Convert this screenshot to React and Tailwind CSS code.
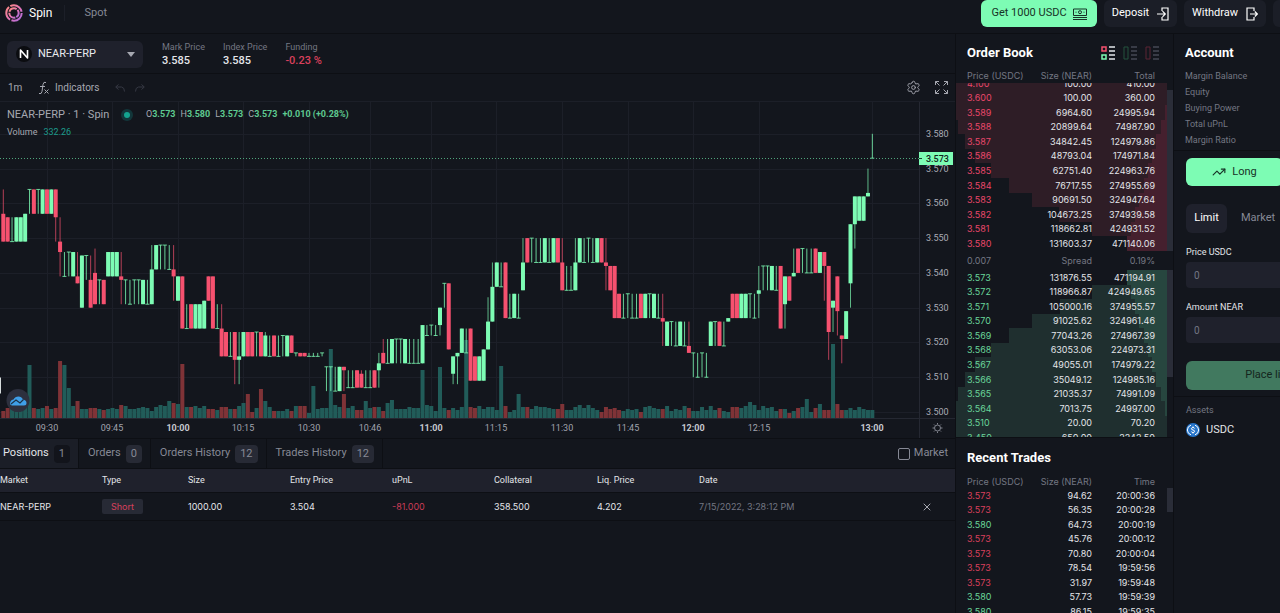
import React from 'react';
import { Settings, TrendingUp, X } from 'lucide-react';
import clsx from 'clsx';

// kind, body top, body bottom, volume, high, low (prices are thousandths above 3.500)
// G = up, R = down, T = doji closing at the high, B = doji closing at the low
const CANDLES = `
R 57 49 7 64|R 56 49 10|B 56 49 10|G 56 49 10|G 56 49 10|G 57 49 12|T 64 57 53|R 64 57 10|T 64 57 9|G 64 57 10|
R 64 57 12|G 64 57 9|R 64 56 10 64 49|R 49 46 57 56 39|B 46 39 53|T 46 39 30|G 46 39 12|R 39 37 17 46|G 45 30 9|T 45 38 9|
R 38 30 10 45|R 40 31 10 47|T 38 31 9|R 38 31 8|G 46 39 9|G 46 39 10|G 46 39 9|R 39 38 13 46 31|T 38 31 12|B 38 31 9|
T 38 31 9|T 38 31 10|G 38 31 11|B 38 31 10|G 41 31 7 48|G 48 41 11|T 48 41 13|T 48 41 12|B 48 41 17|R 41 39 15 48 32|
G 39 32 14|R 39 24 54|B 31 24 11|R 31 24 11|G 31 24 12|G 31 24 10|G 32 24 12|R 39 32 9|R 39 24 9|B 31 24 8|
R 24 16 11 31|R 23 16 11|B 23 16 9|R 23 15 9 23 8|G 16 15 12 23 8|G 23 16 15|R 23 16 24|R 23 16 6|T 23 16 10|R 23 16 29|
G 22 16 17 23|B 22 16 11|R 22 16 7|B 22 16 7|T 22 16 7|G 22 16 9|R 22 17 7|T 17 16 12|R 17 16 12|R 17 16 12|
B 17 16 5|B 17 16 32|B 17 16 9|T 17 16 10|T 13 6 10|T 13 6 69|B 13 6 13|G 13 6 11|R 13 12 24 13 6|B 12 7 10|
B 12 7 12|R 12 7 8|R 11 7 8 12|B 12 7 17|B 12 7 10|R 12 7 11|G 14 12 11 17 7|R 17 14 7 21|B 21 14 15|G 21 14 18|
T 21 14 9|T 21 14 9|G 21 14 9|B 21 14 11|B 21 14 10|B 21 14 10|G 25 14 48|B 25 22 13|T 25 22 12|B 25 22 7|
G 30 25 51 30 22|T 37 30 10|R 37 18 8|G 16 11 10 16 8|G 17 16 8 17 8|G 24 17 11|B 24 17 78|R 24 9 11|R 16 9 10|G 16 9 12|
G 18 9 9|G 26 18 11 33|G 36 26 11 43|G 43 36 8|B 43 36 52|R 43 27 12|B 34 27 6|G 34 27 8|B 34 27 24|G 43 35 11 50|
R 50 43 11|T 50 43 9|B 50 43 12|B 50 43 11|G 50 43 11|B 50 43 10|G 50 43 9|R 50 43 9|R 43 35 14 50|B 42 35 8|
B 42 35 8|G 43 35 11 50|G 50 43 13|B 50 43 10|T 50 43 13|B 50 43 10|G 50 43 8|R 50 43 6|R 43 42 11 50 35|R 42 35 9|
R 42 27 10|R 34 27 8|B 34 27 7|T 34 27 9|B 34 27 8|B 34 27 9|R 34 27 6|G 34 27 11|T 34 27 12|G 34 27 10|
B 34 27 9|R 27 26 9 34 19|G 26 19 12|T 26 19 7|B 26 19 9|G 26 19 8|B 26 19 12|R 19 17 10 26|T 17 10 7|B 17 10 7|
T 17 10 11|B 17 10 8|G 26 19 12|T 26 19 8|R 26 19 10|B 26 19 7|G 27 26 6|R 34 27 11|R 34 27 11|G 34 27 10|
G 34 27 12|T 34 27 16|B 34 27 13|G 35 34 8 42 27|T 42 35 12|T 42 35 10|G 42 35 11|B 42 35 7|R 42 24 9|G 39 31 9 39 24|
R 39 32 5|G 40 39 7 47|R 47 40 10|T 47 40 11|B 47 40 19|B 47 40 6|R 47 40 10|G 46 40 14|R 46 42 8 46 32|R 42 23 8 42 15|
G 32 30 74 32 23|R 39 29 14 39 22|R 22 21 8 22 14|G 29 21 8|G 54 37 10 54 30|G 62 54 8 62 47|G 62 55 11|G 62 55 9|G 63 62 8 70|B 80 73 8`
  .trim()
  .split('|')
  .map((row) => {
    const [kind, ...nums] = row.trim().split(' ');
    const [top, bottom, volume, high = top, low = bottom] = nums.map(Number);
    return { kind, top, bottom, volume, high, low };
  });

const TIMES = [
  [47, '09:30'], [112, '09:45'], [178, '10:00', true], [243, '10:15'], [309, '10:30'],
  [370, '10:46'], [431, '11:00', true], [496, '11:15'], [562, '11:30'], [628, '11:45'],
  [693, '12:00', true], [759, '12:15'], [872, '13:00', true],
];

const PRICES = [80, 70, 60, 50, 40, 30, 20, 10, 0];

// price, size, total, depth bar width
const ASKS = [
  ['4.100', '100.00', '410.00', 211], ['3.600', '100.00', '360.00', 211], ['3.589', '6964.60', '24995.94', 211],
  ['3.588', '20899.64', '74987.90', 209], ['3.587', '34842.45', '124979.86', 202], ['3.586', '48793.04', '174971.84', 192],
  ['3.585', '62751.40', '224963.76', 176], ['3.584', '76717.55', '274955.69', 158], ['3.583', '90691.50', '324947.64', 135],
  ['3.582', '104673.25', '374939.58', 108], ['3.581', '118662.81', '424931.52', 75], ['3.580', '131603.37', '471140.06', 40],
];

const BIDS = [
  ['3.573', '131876.55', '471194.91', 40], ['3.572', '118966.87', '424949.65', 75], ['3.571', '105000.16', '374955.57', 107],
  ['3.570', '91025.62', '324961.46', 135], ['3.569', '77043.26', '274967.39', 158], ['3.568', '63053.06', '224973.31', 176],
  ['3.567', '49055.01', '174979.22', 192], ['3.566', '35049.12', '124985.16', 202], ['3.565', '21035.37', '74991.09', 209],
  ['3.564', '7013.75', '24997.00', 211], ['3.510', '20.00', '70.20', 211], ['3.450', '650.00', '2242.50', 211],
];

const TRADES = [
  ['3.573', '94.62', '20:00:36'], ['3.573', '56.35', '20:00:28'], ['3.580', '64.73', '20:00:19'],
  ['3.573', '45.76', '20:00:12'], ['3.573', '70.80', '20:00:04'], ['3.573', '78.54', '19:59:56'],
  ['3.573', '31.97', '19:59:48'], ['3.580', '57.73', '19:59:39'], ['3.580', '86.15', '19:59:35'],
];

const TABS = [['Positions', 1], ['Orders', 0], ['Orders History', 12], ['Trades History', 12]];

const priceY = (p) => 310 - p * 3.4775;
const barX = (i) => 3.3 + i * 4.367;

function Candle({ candle, index }) {
  const { kind, top, bottom, volume, high, low } = candle;
  const x = barX(index);
  const color = kind === 'R' ? '#f6516f' : '#7dfcb4';
  const isDoji = kind === 'T' || kind === 'B';
  return (
    <g>
      <rect x={x - 2} y={316 - volume} width="4" height={volume} fill={kind === 'R' ? '#7f3337' : '#215c59'} />
      <rect x={x - 0.5} y={priceY(high)} width="1" height={priceY(low) - priceY(high)} fill={color} opacity={isDoji ? 0.8 : 0.7} />
      {isDoji ? (
        <rect x={x - 2} y={priceY(kind === 'T' ? top : bottom) - 0.5} width="4" height="1" fill={color} opacity="0.8" />
      ) : (
        <rect x={x - 2} y={priceY(top)} width="4" height={priceY(bottom) - priceY(top)} fill={color} />
      )}
    </g>
  );
}

function Chart() {
  return (
    <svg viewBox="0 0 955 336" className="block w-full" fontFamily="Roboto, sans-serif" fontSize="9">
      {TIMES.map(([x]) => (
        <path key={x} d={`M${x + 0.5} 0V316`} stroke="#1c1f28" />
      ))}
      {PRICES.map((p) => (
        <path key={p} d={`M0 ${Math.round(priceY(p)) + 0.5}H919`} stroke="#1c1f28" />
      ))}
      <path d="M0 275.5H1V291.5H0" fill="#d6dcdc" />
      {CANDLES.map((candle, i) => (
        <Candle key={i} candle={candle} index={i} />
      ))}
      <path d="M0 56.5H919" stroke="#4fa57c" strokeDasharray="1 2" />
      <path d="M0 316.5H955M919.5 0V336" stroke="#252832" />
      {PRICES.map((p) => (
        <text key={p} x="926" y={priceY(p) + 3} fill="#a9acb5">{(3.5 + p / 1000).toFixed(3)}</text>
      ))}
      <rect x="919" y="50" width="34" height="13" fill="#7dfcb4" />
      <path d="M919 56.5h3" stroke="#1b3b2d" />
      <text x="926" y="60" fill="#10241b" fontWeight="500">3.573</text>
      {TIMES.map(([x, label, bold]) => (
        <text key={x} x={x} y="329" textAnchor="middle" fill={bold ? '#c5c8cf' : '#a0a3ad'} fontWeight={bold ? 700 : 400}>
          {label}
        </text>
      ))}
      <g stroke="#82858f" fill="none" transform="translate(937.5 326)">
        <circle r="3" />
        <path d="M0-5v1.5M0 5v-1.5M-5 0h1.5M5 0h-1.5M-3.5-3.5l1 1M3.5 3.5l-1-1M-3.5 3.5l1-1M3.5-3.5l-1 1" />
      </g>
      {/* TradingView badge */}
      <circle cx="18" cy="298.500" r="11.500" fill="#2d303e" />
      <path d="M12 303.500q-3-1-1.500-4q1-2 3-2q1.500-3 5-3q3 0 4.500 3q3.500.5 3.500 3.500q0 2.500-2.500 2.500z" fill="#3f9fe8" />
      <path d="M11 302l5-4l4 3l3.500-3.500" stroke="#1c3348" strokeWidth="1.200" fill="none" />
    </svg>
  );
}

function SpinLogo() {
  return (
    <svg viewBox="0 0 18 18" className="size-[18px]" fill="none">
      <defs>
        <linearGradient id="spin" x1="0" y1="0" x2="1" y2="1">
          <stop stopColor="#ff8a80" />
          <stop offset="0.5" stopColor="#e777b4" />
          <stop offset="1" stopColor="#a86be0" />
        </linearGradient>
      </defs>
      <circle cx="9" cy="9" r="7.700" stroke="url(#spin)" strokeWidth="2" strokeDasharray="14.600 1.500" />
      <circle cx="9" cy="9" r="4.700" stroke="url(#spin)" strokeWidth="2" strokeDasharray="8.800 1" strokeDashoffset="4" />
    </svg>
  );
}

function BookIcon({ mode }) {
  return (
    <svg viewBox="0 0 14 14" className="size-3.5" fill="none">
      {mode === 'both' && (
        <>
          <path d="M1 1h4v4H1z" stroke="#f6516f" strokeWidth="1.500" />
          <path d="M1 9h4v4H1z" stroke="#7dfcb4" strokeWidth="1.500" />
        </>
      )}
      {mode === 'bids' && <path d="M1 1h4v12H1z" stroke="#25523f" />}
      {mode === 'asks' && <path d="M1 1h4v12H1z" stroke="#5c2434" />}
      <path d="M8 1h6M8 5h6M8 9h6M8 13h6" stroke={mode === 'both' ? '#e4e6ea' : '#454854'} strokeWidth="1.300" />
    </svg>
  );
}

function ColumnHeads({ last }) {
  return (
    <div className="grid grid-cols-[66px_59px_63px] pl-[11px] font-[Inter,sans-serif] text-[9px] leading-3 text-[#737683]">
      <span className="whitespace-nowrap">Price (USDC)</span>
      <span className="flex justify-end whitespace-nowrap">Size (NEAR)</span>
      <span className="text-right">{last}</span>
    </div>
  );
}

function DepthRows({ rows, side }) {
  const ask = side === 'ask';
  return (
    <div className="grid h-[175px] shrink-0 grid-rows-12">
      {rows.map(([price, size, total, depth]) => (
        <div key={price} className="relative flex min-h-0 items-center pl-[11px]">
          <div className={clsx('absolute inset-y-0 right-1.5', ask ? 'bg-[#2e1d26]' : 'bg-[#1f2f2f]')} style={{ width: depth }} />
          <div
            className={clsx('absolute inset-y-0 right-1.5', ask ? 'bg-[#45202e]' : 'bg-[#27463f]')}
            style={{ width: Math.round((Number(total) / 471140) * 40) }}
          />
          <span className={clsx('relative w-10', ask ? 'text-[#e9476a]' : 'text-[#69d69a]')}>{price}</span>
          <span className="relative w-[85px] text-right">{size}</span>
          <span className="relative w-[63px] text-right">{total}</span>
        </div>
      ))}
    </div>
  );
}

function Header() {
  return (
    <header className="flex h-[34px] shrink-0 overflow-hidden border-b border-[#0d0f14]">
      <nav className="flex h-[26px] min-w-0 flex-1 items-center pl-[5px] text-xs">
        <a href="#" className="flex items-center gap-1.5 text-white">
          <SpinLogo />
          Spin
        </a>
        <span className="ml-3 h-4 w-px bg-[#1c1f28]" />
        <a href="#" className="ml-[19px] text-[11px] text-[#868995]">Spot</a>
      </nav>
      <div className="flex h-[27px] w-[299px] shrink-0 gap-[7px] overflow-hidden text-[11px] text-white">
        <button className="flex w-[116px] shrink-0 items-center justify-center gap-1.5 rounded-md bg-[#7dfcb4] text-[#173327]">
          Get 1000 USDC
          <svg viewBox="0 0 14 12" className="h-3 w-3.5" fill="none" stroke="currentColor">
            <path d="M.5 1h13v6.500H.5zM0 9.500h14M0 11.500h14" />
            <circle cx="7" cy="4.200" r="1.500" />
            <path d="M2.500 4.200h1M10.500 4.200h1" />
          </svg>
        </button>
        <button className="flex w-[73px] shrink-0 items-center justify-center gap-2 rounded-md bg-[#1b1e27]">
          Deposit
          <svg viewBox="0 0 12 14" className="h-3.5 w-3" fill="none" stroke="currentColor" strokeWidth="1.200">
            <path d="M5 4V1h6v12H5v-3M0 7h8M5.500 4.200L8.300 7L5.500 9.800" />
          </svg>
        </button>
        <button className="flex w-[82px] shrink-0 items-center justify-center gap-2 rounded-md bg-[#1b1e27]">
          Withdraw
          <svg viewBox="0 0 12 14" className="h-3.5 w-3" fill="none" stroke="currentColor" strokeWidth="1.200">
            <path d="M8 4V1H1v12h7v-3M4 7h7.500M8.800 4.500L11.300 7L8.800 9.500" />
          </svg>
        </button>
        <button aria-label="Wallet" className="w-20 shrink-0 rounded-md bg-[#1b1e27]" />
      </div>
    </header>
  );
}

function MarketBar() {
  return (
    <div className="flex h-10 items-center border-b border-[#0d0f14] pl-[7px]">
      <div className="relative h-[27px] w-[136px]">
        <select aria-label="Market" className="size-full appearance-none rounded-md bg-[#1f212c] pl-[31px] text-[11px] text-[#e9eaee]">
          <option>NEAR-PERP</option>
        </select>
        <svg viewBox="0 0 16 16" className="absolute top-[6px] left-[9px] size-4" fill="none">
          <circle cx="8" cy="8" r="8" fill="#0b0c10" />
          <path d="M4.500 12V4l7 8V4" stroke="#fff" strokeWidth="1.600" strokeLinejoin="round" />
        </svg>
        <svg viewBox="0 0 8 5" className="absolute top-3 right-2 h-[5px] w-2">
          <path d="M0 0h8L4 5z" fill="#a6a8b1" />
        </svg>
      </div>
      <dl className="ml-[19px] flex gap-[18px] text-[9px] leading-[14px] text-[#737683]">
        <div>
          <dt>Mark Price</dt>
          <dd className="text-[11px] font-medium text-[#e3e5e9]">3.585</dd>
        </div>
        <div>
          <dt>Index Price</dt>
          <dd className="text-[11px] font-medium text-[#e3e5e9]">3.585</dd>
        </div>
        <div>
          <dt>Funding</dt>
          <dd className="text-[11px] font-medium text-[#d9405c]">-0.23 %</dd>
        </div>
      </dl>
    </div>
  );
}

function ChartToolbar() {
  return (
    <div className="flex h-7 items-center border-b border-[#1c1f28] pr-[7px] pl-2 text-[10px] text-[#a6a8b1]">
      <button className="w-[30px] text-left">1m</button>
      <button className="flex items-center gap-1.5">
        <svg viewBox="0 0 11 14" className="h-3.5 w-[11px]" fill="none" stroke="currentColor">
          <path d="M8 1.500Q5.500.3 5 3.500L4 10.500Q3.500 13.500 1 12.500M2 5.500h5M6.500 8.500l4 4M10.500 8.500l-4 4" />
        </svg>
        Indicators
      </button>
      <div className="ml-4 flex gap-2.5 text-[#363944]">
        <svg viewBox="0 0 10 8" className="h-2 w-2.5" fill="none" stroke="currentColor">
          <path d="M3.500.5L.7 3L3.500 5.500M1 3h5.500Q9.500 3.500 9.500 7.500" />
        </svg>
        <svg viewBox="0 0 10 8" className="h-2 w-2.5" fill="none" stroke="currentColor">
          <path d="M6.500.5L9.300 3L6.500 5.500M9 3H3.500Q.5 3.500.5 7.500" />
        </svg>
      </div>
      <button aria-label="Chart settings" className="ml-auto">
        <Settings className="size-[15px]" strokeWidth={1.5} />
      </button>
      <button aria-label="Fullscreen" className="ml-3.5">
        <svg viewBox="0 0 13 13" className="size-[13px]" fill="none" stroke="currentColor">
          <path d="M.5 4V.5H4M.5.5l4 4M9 .5h3.500V4M12.500.5l-4 4M.5 9v3.500H4M.5 12.500l4-4M12.500 9v3.500H9M12.500 12.500l-4-4" />
        </svg>
      </button>
    </div>
  );
}

function ChartLegend() {
  const ohlc = [['O', '3.573'], ['H', '3.580'], ['L', '3.573'], ['C', '3.573']];
  return (
    <div className="absolute top-[5px] left-[7px] text-[#a6a8b1]">
      <div className="flex h-4 items-center whitespace-nowrap">
        <span className="w-[114px] text-[11px]">NEAR-PERP · 1 · Spin</span>
        <span className="flex size-3 items-center justify-center rounded-full bg-[#12363a]">
          <span className="size-1.5 rounded-full bg-[#14a38f]" />
        </span>
        <span className="ml-[13px] flex gap-[5px] text-[9px]">
          {ohlc.map(([key, value]) => (
            <span key={key}>
              {key}
              <b className="font-bold text-[#5ec990]">{value}</b>
            </span>
          ))}
          <b className="font-bold text-[#5ec990]">+0.010 (+0.28%)</b>
        </span>
      </div>
      <div className="mt-[3px] flex gap-1.5 text-[9px] leading-3">
        <span>Volume</span>
        <span className="text-[#1c9b8b]">332.26</span>
      </div>
    </div>
  );
}

function Positions() {
  return (
    <section className="min-h-0 flex-1 border-t border-[#0d0f14]">
      <div className="flex h-[29px] text-[11px] text-[#868995]">
        {TABS.map(([label, count], i) => (
          <button
            key={label}
            className={clsx(
              'flex items-center gap-[5px] border-r border-[#0d0f14] pr-2',
              i === 0 ? 'bg-[#1b1e27] pl-[3px] text-[#e3e5e9]' : 'pl-[9px]'
            )}
          >
            {label}
            <span className={clsx('rounded-sm px-[5px] leading-[18px]', i === 0 ? 'bg-[#12141b] text-[#868995]' : 'bg-[#272a35]')}>{count}</span>
          </button>
        ))}
        <label className="mr-[7px] ml-auto flex items-center gap-1">
          <input type="checkbox" className="size-3 appearance-none rounded-xs border border-[#868995]" />
          Market
        </label>
      </div>
      <table className="w-full table-fixed text-left font-[Inter,sans-serif] text-[9px] text-[#e3e5e9]">
        <thead className="font-[Roboto,sans-serif]">
          <tr className="h-6 border-y border-[#0d0f14] bg-[#1f212c]">
            <th className="w-[102px] font-normal">Market</th>
            <th className="w-[86px] font-normal">Type</th>
            <th className="w-[102px] font-normal">Size</th>
            <th className="w-[102px] font-normal">Entry Price</th>
            <th className="w-[102px] font-normal">uPnL</th>
            <th className="w-[103px] font-normal">Collateral</th>
            <th className="w-[102px] font-normal">Liq. Price</th>
            <th className="font-normal">Date</th>
            <th className="w-[34px]" />
          </tr>
        </thead>
        <tbody>
          <tr className="h-7 border-b border-[#0d0f14]">
            <td>NEAR-PERP</td>
            <td>
              <span className="inline-block w-[41px] rounded-xs bg-[#272a35] text-center leading-[15px] text-[#d9405c]">Short</span>
            </td>
            <td>1000.00</td>
            <td>3.504</td>
            <td className="text-[#c93c57]">-81.000</td>
            <td>358.500</td>
            <td>4.202</td>
            <td className="text-[#737683]">7/15/2022, 3:28:12 PM</td>
            <td>
              <button aria-label="Close position" className="block text-[#a6a8b1]">
                <X className="size-3" />
              </button>
            </td>
          </tr>
        </tbody>
      </table>
    </section>
  );
}

function OrderBook() {
  return (
    <section className="flex h-[404px] shrink-0 flex-col border-b border-[#0d0f14] font-[Inter,sans-serif] text-[9px] text-[#e3e5e9]">
      <div className="flex h-9 shrink-0 items-center justify-between pt-0.5 pr-3.5 pl-[11px]">
        <h2 className="font-[Roboto,sans-serif] text-[13px] font-bold text-white">Order Book</h2>
        <div className="flex gap-2">
          <button aria-label="Bids and asks"><BookIcon mode="both" /></button>
          <button aria-label="Bids only"><BookIcon mode="bids" /></button>
          <button aria-label="Asks only"><BookIcon mode="asks" /></button>
        </div>
      </div>
      <ColumnHeads last="Total" />
      <div className="relative mt-px flex h-[168px] shrink-0 flex-col justify-end overflow-hidden">
        <DepthRows rows={ASKS} side="ask" />
        <div className="absolute right-0 bottom-0 h-[161px] w-1.5 bg-[#2a2d38]" />
      </div>
      <div className="flex h-[19px] shrink-0 items-center pl-[11px] text-[#737683]">
        <span className="w-10">0.007</span>
        <span className="w-[85px] text-right">Spread</span>
        <span className="w-[63px] text-right">0.19%</span>
      </div>
      <div className="relative min-h-0 flex-1 overflow-hidden">
        <DepthRows rows={BIDS} side="bid" />
        <div className="absolute top-0 right-0 h-[107px] w-1.5 bg-[#2a2d38]" />
      </div>
    </section>
  );
}

function RecentTrades() {
  return (
    <section className="flex min-h-0 flex-1 flex-col">
      <h2 className="h-[38px] shrink-0 pl-[11px] text-[13px] leading-10 font-bold text-white">Recent Trades</h2>
      <ColumnHeads last="Time" />
      <div className="relative min-h-0 flex-1 overflow-hidden font-[Inter,sans-serif] text-[9px] text-[#e3e5e9]">
        <div className="grid h-[131px] grid-rows-9">
          {TRADES.map(([price, size, time]) => (
            <div key={time} className="flex min-h-0 items-center pl-[11px]">
              <span className={clsx('w-10', price === '3.580' ? 'text-[#69d69a]' : 'text-[#d9405c]')}>{price}</span>
              <span className="w-[85px] text-right">{size}</span>
              <span className="w-[63px] text-right">{time}</span>
            </div>
          ))}
        </div>
        <div className="absolute top-0 right-0 h-6 w-1.5 bg-[#2a2d38]" />
      </div>
    </section>
  );
}

function Account() {
  return (
    <aside className="overflow-hidden border-l border-[#0d0f14]">
      <div className="w-[222px] text-[9px]">
        <section className="h-[117px] border-b border-[#0d0f14] pl-[11px]">
          <h2 className="h-[34px] text-[13px] leading-[38px] font-bold text-white">Account</h2>
          <ul className="leading-4 text-[#737683]">
            <li>Margin Balance</li>
            <li>Equity</li>
            <li>Buying Power</li>
            <li>Total uPnL</li>
            <li>Margin Ratio</li>
          </ul>
        </section>
        <form className="flex h-[246px] flex-col border-b border-[#0d0f14] px-3 pt-[7px] text-[#e3e5e9]">
          <div className="grid h-7 grid-cols-2 gap-1 text-[11px]">
            <button type="button" className="flex items-center justify-center gap-1.5 rounded-md bg-[#7dfcb4] text-[#173327]">
              <TrendingUp className="size-3.5" />
              Long
            </button>
            <button type="button" className="rounded-md bg-[#1f212c]">Short</button>
          </div>
          <div className="mt-[18px] flex h-[29px] gap-3.5 text-[11px] text-[#868995]">
            <button type="button" className="w-[41px] rounded-md bg-[#1f212c] text-white">Limit</button>
            <button type="button">Market</button>
          </div>
          <label htmlFor="price" className="mt-3 leading-[14px]">Price USDC</label>
          <input id="price" placeholder="0" className="mt-[3px] h-[26px] rounded-sm bg-[#1f212c] px-2 text-[10px] placeholder:text-[#737683]" />
          <label htmlFor="amount" className="mt-3 leading-[14px]">Amount NEAR</label>
          <input id="amount" placeholder="0" className="mt-[3px] h-[26px] rounded-sm bg-[#1f212c] px-2 text-[10px] placeholder:text-[#737683]" />
          <button type="submit" className="mt-[18px] h-[29px] rounded-md bg-[#41795f] text-[11px] text-[#14251d]">
            Place limit order
          </button>
        </form>
        <section className="pt-[7px] pl-3">
          <h3 className="leading-3 text-[#737683]">Assets</h3>
          <div className="mt-1 flex items-center gap-1.5 text-[11px] leading-5 text-[#e3e5e9]">
            <svg viewBox="0 0 14 14" className="size-3.5" fill="none" stroke="#fff">
              <circle cx="7" cy="7" r="7" fill="#2775ca" stroke="none" />
              <path d="M5 2.200a5 5 0 0 0 0 9.600M9 2.200a5 5 0 0 1 0 9.600M8.600 5.500Q8.300 4.500 7 4.500T5.400 5.700Q5.400 6.700 7 7T8.600 8.300Q8.500 9.500 7 9.500T5.400 8.500M7 3.500v1M7 9.500v1" />
            </svg>
            USDC
          </div>
        </section>
      </div>
    </aside>
  );
}

export default function App() {
  return (
    <div className="flex h-screen flex-col overflow-hidden bg-[#13161d] font-[Roboto,sans-serif]">
      <Header />
      <main className="grid min-h-0 flex-1 grid-cols-[minmax(0,1fr)_218px_107px]">
        <div className="flex min-h-0 flex-col">
          <MarketBar />
          <ChartToolbar />
          <div className="relative">
            <Chart />
            <ChartLegend />
          </div>
          <Positions />
        </div>
        <div className="flex min-h-0 flex-col border-l border-[#0d0f14]">
          <OrderBook />
          <RecentTrades />
        </div>
        <Account />
      </main>
    </div>
  );
}
